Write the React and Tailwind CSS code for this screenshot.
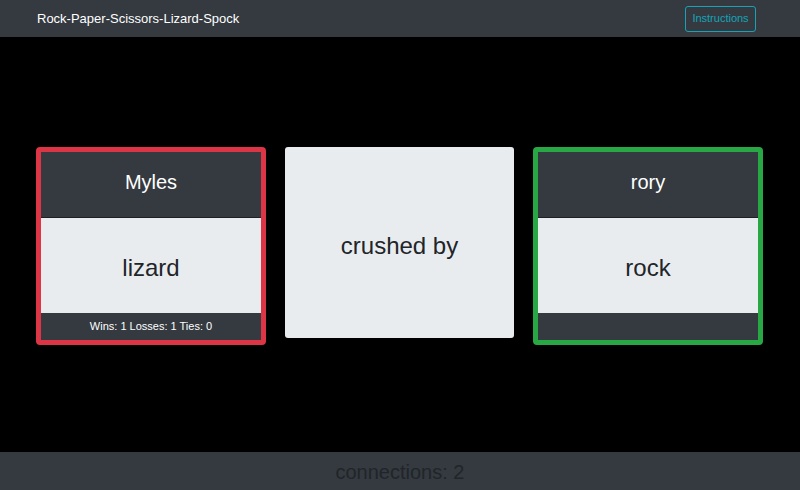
export default function App() {
  const font = { fontFamily: '"Liberation Sans", Arial, sans-serif' };
  return (
    <div className="flex h-[490px] w-[800px] flex-col bg-black" style={font}>
      <nav className="flex h-[37px] items-center justify-between bg-[#343a40] pl-[37px] pr-[44px]">
        <span className="text-[13px] text-white">Rock-Paper-Scissors-Lizard-Spock</span>
        <button className="flex h-[26px] w-[71px] items-center justify-center rounded-[3px] border border-[#17a2b8] text-[11px] text-[#17a2b8]">
          Instructions
        </button>
      </nav>

      <main className="flex flex-1 items-center pl-[36px] pt-[2px]">
        <div className="flex items-start gap-[19px]">
          <PlayerCard name="Myles" choice="lizard" stats="Wins: 1 Losses: 1 Ties: 0" border="border-[#dc3545]" />
          <div className="flex h-[191px] w-[229px] items-center justify-center rounded-[3px] bg-[#e9ecef] pt-[7px] text-[24px] text-[#212529]">
            crushed by
          </div>
          <PlayerCard name="rory" choice="rock" stats="" border="border-[#28a745]" />
        </div>
      </main>

      <footer className="flex h-[38px] items-center justify-center bg-[#343a40] pt-[2px] text-[20px] text-[#212529]">
        connections: 2
      </footer>
    </div>
  );
}

function PlayerCard({ name, choice, stats, border }) {
  return (
    <div className={`flex h-[198px] w-[230px] flex-col rounded-[4px] border-[5px] ${border} bg-[#343a40]`}>
      <div className="flex h-[65px] items-center justify-center pb-[5px] text-[20px] text-white">{name}</div>
      <div className="flex h-[96px] items-center justify-center border-t border-[#1d2124] bg-[#e9ecef] pt-[6px] text-[24px] text-[#212529]">
        {choice}
      </div>
      <div className="flex flex-1 items-center justify-center text-[11px] text-white">{stats}</div>
    </div>
  );
}
